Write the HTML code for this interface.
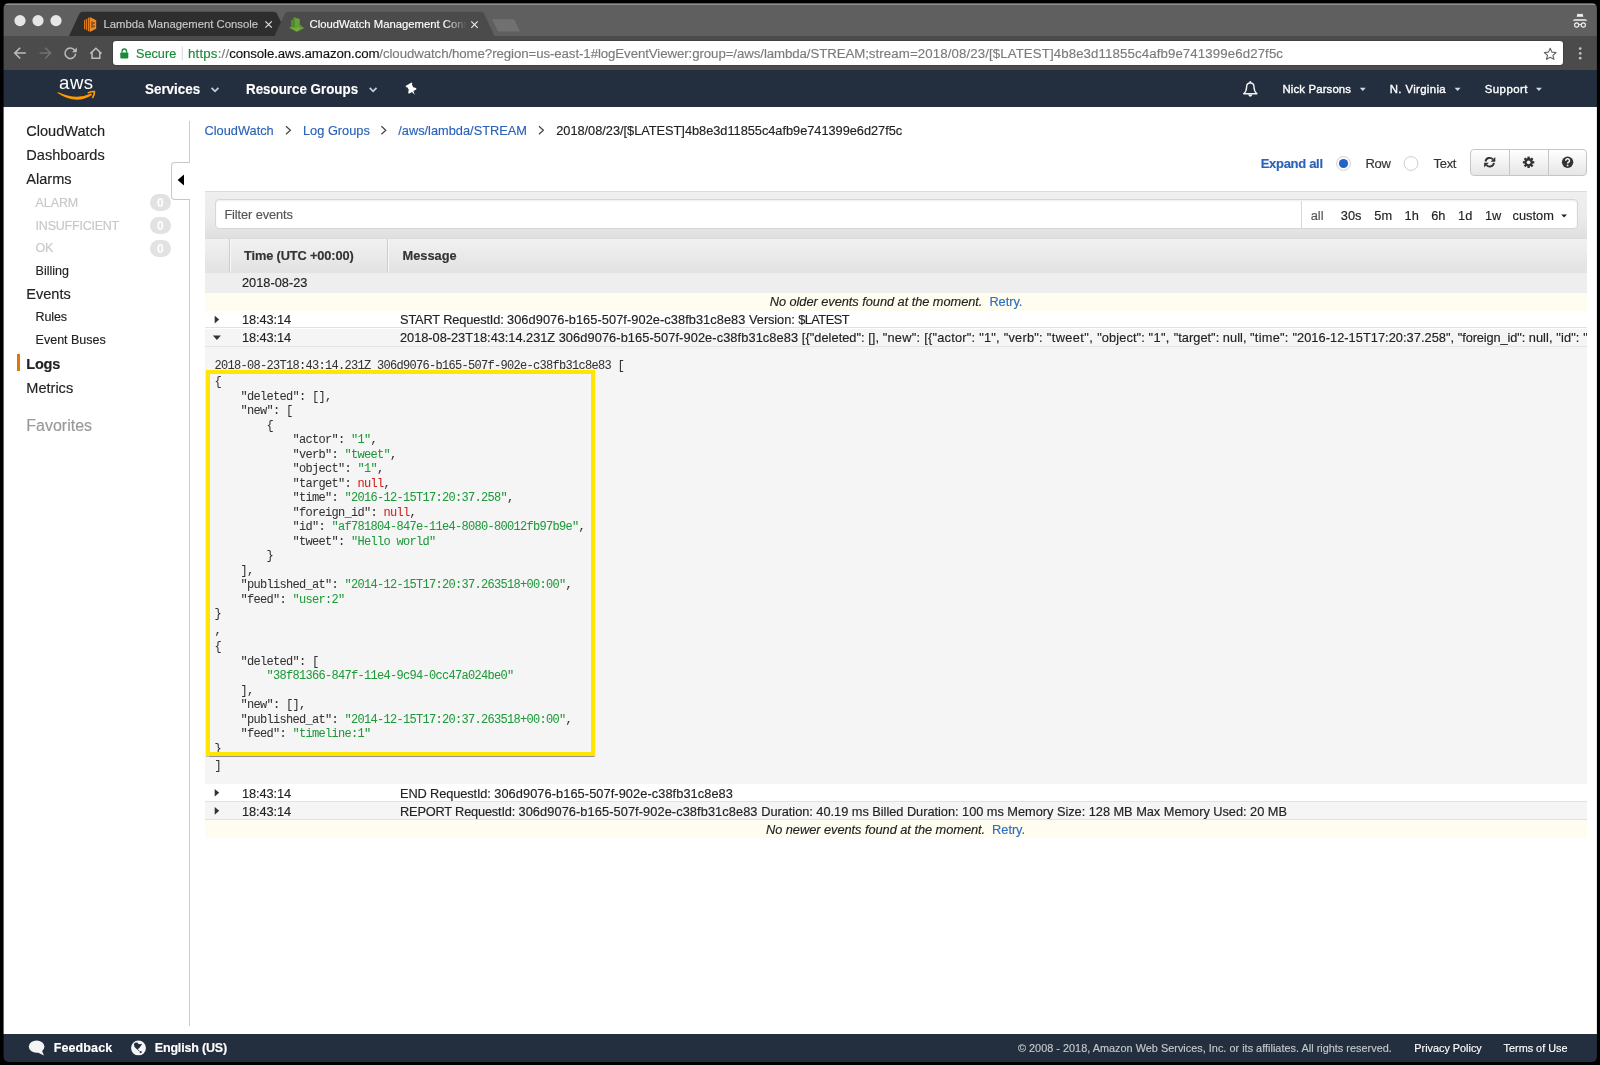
<!DOCTYPE html>
<html>
<head>
<meta charset="utf-8">
<title>CloudWatch Management Console</title>
<style>
*{box-sizing:border-box;margin:0;padding:0}
html,body{width:1600px;height:1065px;overflow:hidden;background:#000}
body{font-family:"Liberation Sans",sans-serif;font-size:13px;color:#222;position:relative}
#win{opacity:0.9999;position:absolute;left:0;top:0;width:1600px;height:1065px;clip-path:inset(3.1px 3.1px 3.1px 3.6px round 5px 5px 5px 5px);background:#fff}
.a{position:absolute}
.t{position:absolute;white-space:nowrap;line-height:16px;height:16px;margin-top:-7.5px;-webkit-text-stroke:0.15px currentColor}
.blue{color:#2a63b8}
.nb{font-weight:bold;font-size:14.4px;color:#fff;transform-origin:0 50%}
.nr{font-size:11.4px;color:#fff;-webkit-text-stroke:0.35px #fff}
.fb{font-weight:bold;font-size:12.5px;color:#fff}
.fr{font-size:10.85px}
.bdg{width:20.6px;height:17.2px;border-radius:8.6px;background:#e2e2e2;color:#fff;font-weight:bold;font-size:12px;text-align:center;line-height:19.4px;overflow:hidden}
.ml{position:absolute;left:214.45px;margin-top:-0.31px;white-space:pre;font-family:"Liberation Mono",monospace;font-size:12px;letter-spacing:-0.701px;line-height:14.5px;height:14.5px;color:#333;-webkit-text-stroke:0.04px currentColor}
.g{color:#1f9a3b}.r{color:#cf1f1a}
/* chrome */
#tabbar{left:0;top:0;width:1600px;height:36px;background:#5f5f5f}
#tabhl{left:0;top:3.7px;width:1600px;height:0.9px;background:#8f8f8f}
#toolbar{left:0;top:36px;width:1600px;height:35px;background:#4b4b4b}
#urlbar{left:112.8px;top:41px;width:1450.4px;height:24px;background:#fff;border-radius:3px;box-shadow:0 0 0 0.8px #3e3e3e}
#nav{left:0;top:70.4px;width:1600px;height:36.3px;background:#232f3e}
#footer{left:0;top:1034.2px;width:1600px;height:31px;background:#232f3e}
</style>
</head>
<body>
<div id="win">
  <!-- CHROME -->
  <div class="a" id="tabbar"></div>
  <div class="a" id="tabhl"></div>
  <div class="a" id="toolbar"></div>
  <svg class="a" style="left:0;top:0" width="1600" height="70" viewBox="0 0 1600 70">
    <!-- traffic lights -->
    <circle cx="20" cy="20.6" r="5.6" fill="#e6e6e6"/>
    <circle cx="38" cy="20.6" r="5.6" fill="#e6e6e6"/>
    <circle cx="56" cy="20.6" r="5.6" fill="#e6e6e6"/>
    <!-- inactive tab -->
    <path d="M69 36 L79.5 13.5 Q80.5 11.7 82.5 11.7 L274 11.7 Q276 11.7 277 13.5 L287.5 36 Z" fill="#2e2e2e"/>
    <!-- active tab -->
    <path d="M274.5 36 L285 13.5 Q286 11.7 288 11.7 L481 11.7 Q483 11.7 484 13.5 L494.5 36 Z" fill="#4b4b4b"/>
    <!-- new tab button -->
    <path d="M492 19.2 L514 19.2 L520 31.5 L498 31.5 Z" fill="#717171"/>
    <!-- lambda icon -->
    <g>
      <path d="M84 20.2 L85.2 19.6 L85.2 29.4 L84 28.8 Z" fill="#d9761a"/>
      <path d="M85.8 19.2 L87.2 18.5 L87.2 30.5 L85.8 29.8 Z" fill="#d9761a"/>
      <path d="M87.9 18.1 L89.4 17.3 L89.4 31.6 L87.9 30.9 Z" fill="#e07d20"/>
      <path d="M89.8 17.1 L96.2 20.3 L96.2 28.7 L89.8 31.9 Z" fill="#ec8a2a"/>
      <path d="M91.2 21.2 L94.8 22.2 L94.8 24 L93 23.7 L93 25.4 L94.8 25.1 L94.8 26.9 L91.2 27.9 Z" fill="#9a5214"/>
    </g>
    <!-- cloudwatch icon -->
    <g>
      <path d="M289.3 27.8 L296.5 24.2 L303.8 27.8 L296.5 31.6 Z" fill="#74ad40"/>
      <path d="M289.3 27.8 L296.5 31.6 L296.5 32.3 L289.3 28.6 Z" fill="#4d7c2a"/>
      <path d="M296.5 31.6 L303.8 27.8 L303.8 28.6 L296.5 32.3 Z" fill="#5e9632"/>
      <path d="M291.2 20.2 L293 19.2 L293 28.2 L291.2 27.3 Z" fill="#5a8f30"/>
      <path d="M293 18.3 L294.6 17.3 L299.8 19.3 L299.8 26.2 L296.3 28.6 L293 27 Z" fill="#64a035"/>
      <path d="M293 18.3 L294.6 17.3 L294.6 27.8 L293 27 Z" fill="#4f8229"/>
      <path d="M299.8 24.6 L301.6 25.4 L301.6 27.4 L299.8 28.2 Z" fill="#5a8f30"/>
    </g>
    <!-- tab close -->
    <path d="M265.4 21.3 L271.8 27.7 M271.8 21.3 L265.4 27.7" stroke="#e0e0e0" stroke-width="1.2" fill="none"/>
    <path d="M471.3 21.4 L477.7 27.8 M477.7 21.4 L471.3 27.8" stroke="#e8e8e8" stroke-width="1.2" fill="none"/>
    <!-- back -->
    <path d="M25.8 53.1 L14.8 53.1 M20.2 47.7 L14.7 53.1 L20.2 58.5" stroke="#bdbdbd" stroke-width="1.5" fill="none"/>
    <!-- forward -->
    <path d="M39.6 53.1 L50.6 53.1 M45.2 47.7 L50.7 53.1 L45.2 58.5" stroke="#727272" stroke-width="1.5" fill="none"/>
    <!-- reload -->
    <path d="M74.6 50.2 A5.3 5.3 0 1 0 75.6 53.6" stroke="#bdbdbd" stroke-width="1.5" fill="none"/>
    <path d="M76.8 47.4 L76.8 52.2 L72 52.2 Z" fill="#bdbdbd"/>
    <!-- home -->
    <path d="M90.3 53.6 L95.9 48.3 L101.5 53.6 M92 52.4 L92 58.2 L99.8 58.2 L99.8 52.4" stroke="#bdbdbd" stroke-width="1.5" fill="none"/>
    <!-- incognito -->
    <g fill="#f2f2f2">
      <path d="M1576.6 16.8 L1577.6 13.6 L1579.2 14.2 L1580 13.8 L1580.8 14.2 L1582.4 13.6 L1583.4 16.8 Z"/>
      <path d="M1572.8 20.4 L1574.4 19.2 L1585.6 19.2 L1587.2 20.4 L1587.2 20.8 L1572.8 20.8 Z"/>
    </g>
    <circle cx="1576.7" cy="25" r="2.1" stroke="#f2f2f2" stroke-width="1.1" fill="none"/>
    <circle cx="1583.3" cy="25" r="2.1" stroke="#f2f2f2" stroke-width="1.1" fill="none"/>
    <path d="M1578.8 24.6 L1581.2 24.6" stroke="#f2f2f2" stroke-width="1"/>
    <!-- menu dots -->
    <circle cx="1580.2" cy="48.6" r="1.4" fill="#bdbdbd"/>
    <circle cx="1580.2" cy="53.4" r="1.4" fill="#bdbdbd"/>
    <circle cx="1580.2" cy="58.2" r="1.4" fill="#bdbdbd"/>
  </svg>
  <div class="a" id="urlbar"></div>
  <div class="t" style="left:103.5px;top:23.5px;font-size:11.3px;color:#c9c9c9" id="tab1t">Lambda Management Console</div>
  <div class="t" style="left:309.5px;top:23.5px;font-size:11.3px;color:#fff;width:157px;overflow:hidden;-webkit-mask-image:linear-gradient(90deg,#000 135px,transparent 157px)" id="tab2t">CloudWatch Management Console</div>
  <svg class="a" style="left:113px;top:41px" width="1460" height="25" viewBox="113 41 1460 25">
    <!-- lock -->
    <rect x="120.3" y="52.4" width="8" height="6.2" rx="0.8" fill="#1a8a3a"/>
    <path d="M122 52.6 L122 51.3 A2.3 2.3 0 0 1 126.6 51.3 L126.6 52.6" stroke="#1a8a3a" stroke-width="1.3" fill="none"/>
    <path d="M182.3 46.5 L182.3 60.5" stroke="#d8d8d8" stroke-width="1"/>
    <!-- star -->
    <path d="M1550.2 48.2 L1551.9 52.1 L1556.1 52.5 L1552.9 55.3 L1553.9 59.4 L1550.2 57.2 L1546.5 59.4 L1547.5 55.3 L1544.3 52.5 L1548.5 52.1 Z" stroke="#5a5f64" stroke-width="1.1" fill="none" stroke-linejoin="round"/>
  </svg>
  <div class="t" style="left:136px;top:53px;font-size:12.7px;color:#1a8a3a" id="secure">Secure</div>
  <div class="t" style="left:188px;top:53px;font-size:13.25px;color:#7a7a7a" id="url"><span style="letter-spacing:0.19px"><span style="color:#1a8a3a">https</span>://</span><span style="color:#111;letter-spacing:-0.11px">console.aws.amazon.com</span><span style="letter-spacing:-0.081px">/cloudwatch/home?region=us-east-1#logEventViewer:group=/aws/lambda/STREAM;</span><span style="letter-spacing:0.107px">stream=2018/08/23/[$LATEST]4b8e3d11855c4afb9e741399e6d27f5c</span></div>
  <!-- AWSNAV -->
  <div class="a" id="nav"></div>
  <div class="t" style="left:59.1px;top:83.1px;font-size:18.6px;color:#fff;line-height:20px;height:20px;margin-top:-10px;letter-spacing:0.45px;-webkit-text-stroke:0" id="awst">aws</div>
  <svg class="a" style="left:0;top:70px" width="1600" height="36" viewBox="0 70 1600 36">
    <!-- swoosh -->
    <path d="M57.8 91.9 Q76 100.5 91.3 93.5 L92 95 Q76 105.4 57.5 93 Z" fill="#ff9900"/>
    <path d="M88.3 92.7 Q91.8 91.3 94.5 91.5 Q94.5 94.6 92.7 97.5" stroke="#ff9900" stroke-width="1.6" fill="none" stroke-linecap="round" stroke-linejoin="round"/>
    <!-- chevrons -->
    <path d="M211.6 87.9 L215 91.3 L218.4 87.9" stroke="#c9cdd1" stroke-width="1.8" fill="none"/>
    <path d="M369.7 87.9 L373.1 91.3 L376.5 87.9" stroke="#c9cdd1" stroke-width="1.8" fill="none"/>
    <!-- pin -->
    <g transform="translate(411.65 89.6) rotate(-30)">
      <path d="M-3.5 -6.2 L3.5 -6.2 L3.5 -4.7 L2.7 -4.2 L2.6 -1.2 L4.5 0.8 L4.5 2.2 L0.8 2.2 L0 6.3 L-0.8 2.2 L-4.5 2.2 L-4.5 0.8 L-2.6 -1.2 L-2.7 -4.2 L-3.5 -4.7 Z" fill="#fff"/>
    </g>
    <!-- bell -->
    <path d="M1243.7 93.8 C1246.3 91.4 1246.6 89 1246.6 86.9 C1246.6 84.3 1248 83 1250.3 83 C1252.6 83 1254 84.3 1254 86.9 C1254 89 1254.3 91.4 1256.9 93.8 Z" stroke="#f4f4f4" stroke-width="1.4" fill="none" stroke-linejoin="round"/>
    <circle cx="1250.3" cy="82" r="0.9" fill="#f4f4f4"/>
    <path d="M1248 94.4 Q1250.3 99 1252.5 94.4 Z" fill="#f4f4f4"/>
    <!-- carets -->
    <path d="M1359.8 87.8 L1365.8 87.8 L1362.8 91 Z" fill="#d5d9dd"/>
    <path d="M1454.6 87.8 L1460.6 87.8 L1457.6 91 Z" fill="#d5d9dd"/>
    <path d="M1535.9 87.8 L1541.9 87.8 L1538.9 91 Z" fill="#d5d9dd"/>
  </svg>
  <div class="t nb" style="left:144.7px;top:88.01px;transform:scaleX(0.932)" id="n1">Services</div>
  <div class="t nb" style="left:245.6px;top:88.01px;transform:scaleX(0.928)" id="n2">Resource Groups</div>
  <div class="t nr" style="left:1282.5px;top:88.05px;letter-spacing:0.13px" id="n3">Nick Parsons</div>
  <div class="t nr" style="left:1389.8px;top:88.05px;letter-spacing:0.35px" id="n4">N. Virginia</div>
  <div class="t nr" style="left:1484.8px;top:88.05px;letter-spacing:0.44px" id="n5">Support</div>
  <!-- SIDEBAR -->
  <div class="a" style="left:189px;top:121px;width:1px;height:41px;background:#ccc"></div>
  <div class="a" style="left:189px;top:199px;width:1px;height:827px;background:#ccc"></div>
  <div class="a" style="left:171px;top:162px;width:19px;height:37.5px;border:1px solid #c8c8c8;border-right:none;border-radius:4px 0 0 4px;background:#fff"></div>
  <svg class="a" style="left:176px;top:172px" width="10" height="20" viewBox="176 172 10 20"><path d="M177.6 180 L184 174.5 L184 185.5 Z" fill="#000"/></svg>
  <div class="t " style="left:26.3px;top:130.56px;font-size:14.55px;color:#222;">CloudWatch</div>
  <div class="t " style="left:26.3px;top:154.71px;font-size:14.55px;color:#222;">Dashboards</div>
  <div class="t " style="left:26.3px;top:178.71px;font-size:14.55px;color:#222;">Alarms</div>
  <div class="t " style="left:26.3px;top:293.71px;font-size:14.55px;color:#222;">Events</div>
  <div class="t " style="left:26.3px;top:387.66px;font-size:14.55px;color:#222;">Metrics</div>
  <div class="t " style="left:26.3px;top:363.36px;font-size:14.55px;color:#222;font-weight:bold;letter-spacing:-0.25px;">Logs</div>
  <div class="a" style="left:17px;top:354.2px;width:3px;height:16.8px;background:#e07700"></div>
  <div class="t " style="left:35.6px;top:202.57px;font-size:12.5px;color:#c8c8c8;letter-spacing:-0.11px;">ALARM</div>
  <div class="t " style="left:35.6px;top:225.07px;font-size:12.5px;color:#c8c8c8;letter-spacing:-0.225px;">INSUFFICIENT</div>
  <div class="t " style="left:35.6px;top:247.57px;font-size:12.5px;color:#c8c8c8;letter-spacing:-0.28px;">OK</div>
  <div class="t " style="left:35.6px;top:270.27px;font-size:12.5px;color:#222;">Billing</div>
  <div class="t " style="left:35.6px;top:316.97px;font-size:12.5px;color:#222;letter-spacing:-0.15px;">Rules</div>
  <div class="t " style="left:35.6px;top:339.32px;font-size:12.5px;color:#222;">Event Buses</div>
  <div class="t " style="left:26.3px;top:425.06px;font-size:16px;color:#999;">Favorites</div>
  <div class="a bdg" style="left:150px;top:194px">0</div>
  <div class="a bdg" style="left:150px;top:217.25px">0</div>
  <div class="a bdg" style="left:150px;top:239.6px">0</div>
  <!-- MAIN -->
  <div class="t blue" style="left:204.5px;top:130.06px;font-size:12.8px;">CloudWatch</div>
  <div class="t blue" style="left:303px;top:130.06px;font-size:12.8px;">Log Groups</div>
  <div class="t blue" style="left:398.25px;top:130.06px;font-size:12.8px;">/aws/lambda/STREAM</div>
  <div class="t " style="left:556.25px;top:130.06px;font-size:12.8px;color:#222;letter-spacing:-0.03px;">2018/08/23/[$LATEST]4b8e3d11855c4afb9e741399e6d27f5c</div>
  <svg class="a" style="left:280px;top:120px" width="280" height="20" viewBox="280 120 280 20"><g stroke="#444" stroke-width="1.2" fill="none"><path d="M286 126.2 L290.4 130.2 L286 134.2"/><path d="M381.4 126.2 L385.8 130.2 L381.4 134.2"/><path d="M539 126.2 L543.4 130.2 L539 134.2"/></g></svg>
  <div class="t blue" style="left:1260.7px;top:163.60px;font-size:13px;font-weight:bold;letter-spacing:-0.3px;">Expand all</div>
  <div class="t " style="left:1365.6px;top:163.60px;font-size:13px;color:#333;letter-spacing:-0.4px;">Row</div>
  <div class="t " style="left:1433.5px;top:163.60px;font-size:13px;color:#333;letter-spacing:-0.3px;">Text</div>
  <svg class="a" style="left:1330px;top:150px" width="100" height="28" viewBox="1330 150 100 28">
    <circle cx="1343.5" cy="163.5" r="6.9" fill="#fff" stroke="#cacaca" stroke-width="0.9"/>
    <circle cx="1343.5" cy="163.5" r="4.6" fill="#2463c4"/>
    <circle cx="1411" cy="163.5" r="6.9" fill="#fff" stroke="#cacaca" stroke-width="0.9"/>
  </svg>
  <div class="a" style="left:1470.3px;top:149.3px;width:116.9px;height:27.2px;border:1px solid #c6c6c6;border-radius:4px;background:linear-gradient(#fff,#e6e6e6)"></div>
  <svg class="a" style="left:1470px;top:150px" width="118" height="27" viewBox="1470 150 118 27">
    <g transform="translate(1489.7 162.2)" fill="#333">
      <path d="M-4.2 -0.7 A4.2 4.2 0 0 1 3.2 -2.8" stroke="#333" stroke-width="1.9" fill="none"/>
      <path d="M5.6 -5.2 L5.6 -0.5 L0.9 -0.5 Z"/>
      <path d="M4.2 0.7 A4.2 4.2 0 0 1 -3.2 2.8" stroke="#333" stroke-width="1.9" fill="none"/>
      <path d="M-5.6 5.2 L-5.6 0.5 L-0.9 0.5 Z"/>
    </g>
    <g transform="translate(1528.6 162.3)" fill="#333">
      <circle r="4.2"/><rect x="-1.15" y="-5.7" width="2.3" height="3" transform="rotate(0)"/><rect x="-1.15" y="-5.7" width="2.3" height="3" transform="rotate(45)"/><rect x="-1.15" y="-5.7" width="2.3" height="3" transform="rotate(90)"/><rect x="-1.15" y="-5.7" width="2.3" height="3" transform="rotate(135)"/><rect x="-1.15" y="-5.7" width="2.3" height="3" transform="rotate(180)"/><rect x="-1.15" y="-5.7" width="2.3" height="3" transform="rotate(225)"/><rect x="-1.15" y="-5.7" width="2.3" height="3" transform="rotate(270)"/><rect x="-1.15" y="-5.7" width="2.3" height="3" transform="rotate(315)"/>
      <circle r="1.9" fill="#f2f2f2"/>
    </g>
    <g transform="translate(1567.6 162.3)">
      <circle r="5.7" fill="#333"/>
      <path d="M-1.9 -1.5 A1.9 1.9 0 1 1 0.9 0 Q0 0.4 0 1.3" stroke="#f4f4f4" stroke-width="1.5" fill="none"/>
      <circle cx="0" cy="3.1" r="0.9" fill="#f4f4f4"/>
    </g>
  </svg>
  <div class="a" style="left:1509px;top:150.3px;width:1px;height:25.4px;background:#c6c6c6"></div>
  <div class="a" style="left:1547.9px;top:150.3px;width:1px;height:25.4px;background:#c6c6c6"></div>
  <div class="a" style="left:205px;top:191px;width:1382px;height:47px;background:linear-gradient(#efefef,#eaeaea 60%,#dfdfdf);border-top:1px solid #dcdcdc"></div>
  <div class="a" style="left:214.5px;top:199.2px;width:1363.2px;height:30.2px;background:#fff;border:1px solid #d6d6d6;border-radius:4px;box-shadow:inset 0 1px 2px rgba(0,0,0,0.07)"></div>
  <div class="a" style="left:1301px;top:200.5px;width:1px;height:27.8px;background:#d8d8d8"></div>
  <div class="t " style="left:224.4px;top:214.31px;font-size:12.8px;color:#555;letter-spacing:-0.1px;">Filter events</div>
  <div class="t " style="left:1310.7px;top:215.06px;font-size:12.8px;color:#555;">all</div>
  <div class="t " style="left:1340.8px;top:215.06px;font-size:12.8px;color:#222;">30s</div>
  <div class="t " style="left:1374.3px;top:215.06px;font-size:12.8px;color:#222;">5m</div>
  <div class="t " style="left:1404.6px;top:215.06px;font-size:12.8px;color:#222;">1h</div>
  <div class="t " style="left:1431.2px;top:215.06px;font-size:12.8px;color:#222;">6h</div>
  <div class="t " style="left:1458.1px;top:215.06px;font-size:12.8px;color:#222;">1d</div>
  <div class="t " style="left:1485px;top:215.06px;font-size:12.8px;color:#222;">1w</div>
  <div class="t " style="left:1512.6px;top:215.06px;font-size:12.8px;color:#222;">custom</div>
  <svg class="a" style="left:1560px;top:212px" width="10" height="8" viewBox="1560 212 10 8"><path d="M1561.2 214.6 L1567 214.6 L1564.1 217.4 Z" fill="#222"/></svg>
  <div class="a" style="left:205px;top:237.7px;width:1382px;height:35.9px;background:linear-gradient(#f1f1f1,#e2e2e2);border-top:1px solid #dcdcdc;border-bottom:1px solid #cfcfcf"></div>
  <div class="a" style="left:229.2px;top:238.7px;width:1px;height:33.5px;background:#cdcdcd"></div>
  <div class="a" style="left:230.2px;top:238.7px;width:1px;height:33.5px;background:#f8f8f8"></div>
  <div class="a" style="left:387.2px;top:238.7px;width:1px;height:33.5px;background:#cdcdcd"></div>
  <div class="a" style="left:388.2px;top:238.7px;width:1px;height:33.5px;background:#f8f8f8"></div>
  <div class="t " style="left:244px;top:255.56px;font-size:12.8px;font-weight:bold;color:#333;letter-spacing:-0.13px;">Time (UTC +00:00)</div>
  <div class="t " style="left:402.5px;top:255.56px;font-size:12.8px;font-weight:bold;color:#333;">Message</div>
  <div class="a" style="left:205px;top:273.2px;width:1382px;height:19.60px;background:#eeeeee;"></div>
  <div class="t " style="left:242px;top:282.76px;font-size:12.8px;color:#222;">2018-08-23</div>
  <div class="a" style="left:205px;top:292.8px;width:1382px;height:18.10px;background:#fffdf0;"></div>
  <div class="t " style="left:769.7px;top:301.16px;font-size:12.8px;font-style:italic;color:#222;letter-spacing:-0.04px;">No older events found at the moment.&nbsp; <span style="font-style:normal;color:#2b6fc2">Retry.</span></div>
  <div class="a" style="left:205px;top:310.9px;width:1382px;height:17.60px;background:#ffffff;border-bottom:1px solid #e2e2e2;"></div>
  <div class="a" style="left:205px;top:328.5px;width:1382px;height:18.00px;background:#f5f5f5;border-bottom:1px solid #e2e2e2;"></div>
  <div class="a" style="left:205px;top:346.5px;width:1382px;height:437.50px;background:#f5f5f5;"></div>
  <div class="a" style="left:205px;top:784px;width:1382px;height:17.80px;background:#ffffff;border-bottom:1px solid #e2e2e2;"></div>
  <div class="a" style="left:205px;top:801.8px;width:1382px;height:18.00px;background:#f5f5f5;border-bottom:1px solid #e2e2e2;"></div>
  <div class="a" style="left:205px;top:819.8px;width:1382px;height:18.30px;background:#fffdf0;"></div>
  <div class="t " style="left:242px;top:319.56px;font-size:12.8px;color:#222;letter-spacing:-0.1px;">18:43:14</div>
  <div class="t " style="left:242px;top:337.76px;font-size:12.8px;color:#222;letter-spacing:-0.1px;">18:43:14</div>
  <div class="t " style="left:242px;top:793.36px;font-size:12.8px;color:#222;letter-spacing:-0.1px;">18:43:14</div>
  <div class="t " style="left:242px;top:811.36px;font-size:12.8px;color:#222;letter-spacing:-0.1px;">18:43:14</div>
  <div class="t msg" style="left:400px;top:319.56px;font-size:12.8px;color:#222;"><span style="letter-spacing:-0.151px">START RequestId: </span><span style="letter-spacing:0.063px">306d9076-b165-507f-902e-c38fb31c8e83 </span><span style="letter-spacing:-0.088px">Version: </span><span style="letter-spacing:-0.532px">$LATEST</span></div>
  <div class="a" style="left:400px;top:330px;width:1187px;height:16px;overflow:hidden"><div class="t msg" style="left:0px;top:7.76px;font-size:12.8px;color:#222;"><span style="letter-spacing:-0.03px">2018-08-23T18:43:14.231Z </span><span style="letter-spacing:0.092px">306d9076-b165-507f-902e-c38fb31c8e83 </span><span style="letter-spacing:0.033px">[{"deleted": [], </span><span style="letter-spacing:0.261px">"new": </span><span style="letter-spacing:0.232px">[{"actor": "1", </span><span style="letter-spacing:0.251px">"verb": </span><span style="letter-spacing:0.413px">"tweet", </span><span style="letter-spacing:0.096px">"object": </span><span style="letter-spacing:0.357px">"1", </span><span style="letter-spacing:0.028px">"target": </span><span style="letter-spacing:0.028px">null, </span><span style="letter-spacing:0.254px">"time": </span><span style="letter-spacing:0.041px">"2016-12-15T17:20:37.258", </span><span style="letter-spacing:-0.107px">"foreign_id": </span><span style="letter-spacing:0.095px">null, </span><span style="letter-spacing:0.120px">"id": "af781804-847e-11e4-8080-80012fb97b9e"</span></div></div>
  <div class="t msg" style="left:400px;top:793.36px;font-size:12.8px;color:#222;"><span style="letter-spacing:-0.12px">END RequestId: </span><span style="letter-spacing:0.07px">306d9076-b165-507f-902e-c38fb31c8e83</span></div>
  <div class="t msg" style="left:400px;top:811.36px;font-size:12.8px;color:#222;"><span style="letter-spacing:-0.19px">REPORT RequestId: </span><span style="letter-spacing:0.08px">306d9076-b165-507f-902e-c38fb31c8e83 </span><span style="letter-spacing:-0.032px">Duration: 40.19 ms Billed Duration: 100 ms Memory Size: 128 MB Max Memory Used: 20 MB</span></div>
  <div class="t " style="left:766px;top:829.16px;font-size:12.8px;font-style:italic;color:#222;letter-spacing:-0.04px;">No newer events found at the moment.&nbsp; <span style="font-style:normal;color:#2b6fc2">Retry.</span></div>
  <svg class="a" style="left:210px;top:312px" width="14" height="510" viewBox="210 312 14 510">
    <path d="M214.7 315.8 L219.2 319.6 L214.7 323.4 Z" fill="#333"/>
    <path d="M212.9 335.6 L220.9 335.6 L216.9 340 Z" fill="#333"/>
    <path d="M214.7 788.9 L219.2 792.75 L214.7 796.6 Z" fill="#333"/>
    <path d="M214.7 807 L219.2 810.85 L214.7 814.7 Z" fill="#333"/>
  </svg>
  <div class="ml" style="top:359.36px">2018-08-23T18:43:14.231Z 306d9076-b165-507f-902e-c38fb31c8e83 [</div>
  <div class="ml" style="top:375.61px">{</div>
  <div class="ml" style="top:390.09px">    "deleted": [],</div>
  <div class="ml" style="top:404.57px">    "new": [</div>
  <div class="ml" style="top:419.05px">        {</div>
  <div class="ml" style="top:433.53px">            "actor": <span class="g">"1"</span>,</div>
  <div class="ml" style="top:448.01px">            "verb": <span class="g">"tweet"</span>,</div>
  <div class="ml" style="top:462.49px">            "object": <span class="g">"1"</span>,</div>
  <div class="ml" style="top:476.97px">            "target": <span class="r">null</span>,</div>
  <div class="ml" style="top:491.45px">            "time": <span class="g">"2016-12-15T17:20:37.258"</span>,</div>
  <div class="ml" style="top:505.93px">            "foreign_id": <span class="r">null</span>,</div>
  <div class="ml" style="top:520.41px">            "id": <span class="g">"af781804-847e-11e4-8080-80012fb97b9e"</span>,</div>
  <div class="ml" style="top:534.89px">            "tweet": <span class="g">"Hello world"</span></div>
  <div class="ml" style="top:549.37px">        }</div>
  <div class="ml" style="top:563.85px">    ],</div>
  <div class="ml" style="top:578.33px">    "published_at": <span class="g">"2014-12-15T17:20:37.263518+00:00"</span>,</div>
  <div class="ml" style="top:592.81px">    "feed": <span class="g">"user:2"</span></div>
  <div class="ml" style="top:607.29px">}</div>
  <div class="ml" style="top:624.66px">,</div>
  <div class="ml" style="top:640.36px">{</div>
  <div class="ml" style="top:654.86px">    "deleted": [</div>
  <div class="ml" style="top:669.36px">        <span class="g">"38f81366-847f-11e4-9c94-0cc47a024be0"</span></div>
  <div class="ml" style="top:683.86px">    ],</div>
  <div class="ml" style="top:698.36px">    "new": [],</div>
  <div class="ml" style="top:712.86px">    "published_at": <span class="g">"2014-12-15T17:20:37.263518+00:00"</span>,</div>
  <div class="ml" style="top:727.36px">    "feed": <span class="g">"timeline:1"</span></div>
  <div class="ml" style="top:741.86px">}</div>
  <div class="ml" style="top:759.36px">]</div>
  <div class="a" style="left:205.8px;top:370px;width:389.4px;height:386px;border:4.1px solid #ffe500;box-shadow:0 0.8px 1px rgba(0,0,0,0.4)"></div>
  <!-- FOOTER -->
  <div class="a" id="footer"></div>
  <svg class="a" style="left:0;top:1034px" width="300" height="28" viewBox="0 1034 300 28">
    <!-- speech bubble -->
    <ellipse cx="36.6" cy="1046.6" rx="7.8" ry="6.2" fill="#f5f5f5"/>
    <path d="M37.4 1052.2 L43.9 1055.4 L41.8 1050.2 Z" fill="#f5f5f5"/>
    <!-- globe -->
    <circle cx="138.5" cy="1047.9" r="7.45" fill="#f5f5f5"/>
    <path d="M133.9 1043.8 L135.2 1042.7 L137.4 1042.6 L138.5 1044 L140.2 1044.3 L141.4 1043.7 L142 1044.3 L139.7 1047.6 L137.6 1049.5 L136.3 1048.7 L134.4 1046.7 Z" fill="#232f3e"/>
    <path d="M137.4 1049.2 L139.4 1051.3" stroke="#232f3e" stroke-width="0.8"/>
    <circle cx="140.7" cy="1052.1" r="1.05" fill="#232f3e"/>
  </svg>
  <div class="t fb" style="left:53.7px;top:1047.8px;letter-spacing:0.12px" id="f1">Feedback</div>
  <div class="t fb" style="left:154.8px;top:1047.8px;letter-spacing:-0.18px" id="f2">English (US)</div>
  <div class="t fr" style="left:1018px;top:1047.9px;color:#c3c8cc;letter-spacing:0.027px" id="f3">© 2008 - 2018, Amazon Web Services, Inc. or its affiliates. All rights reserved.</div>
  <div class="t fr" style="left:1414.3px;top:1047.9px;color:#fff" id="f4">Privacy Policy</div>
  <div class="t fr" style="left:1503.6px;top:1047.9px;color:#fff" id="f5">Terms of Use</div>
</div>
</body>
</html>
